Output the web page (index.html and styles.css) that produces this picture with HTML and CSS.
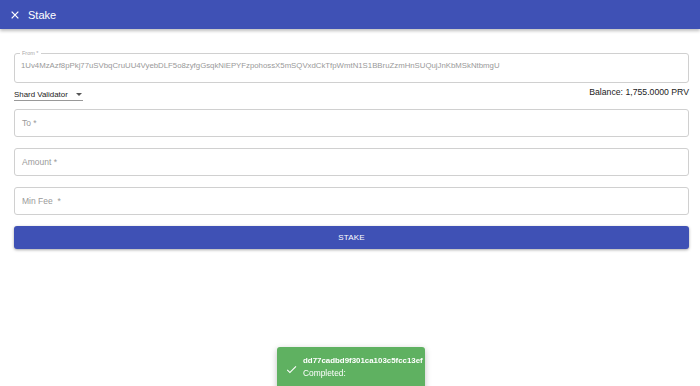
FILE: index.html
```html
<!DOCTYPE html>
<html>
<head>
<meta charset="utf-8">
<link rel="stylesheet" href="styles.css">
</head>
<body>
<header class="appbar">
  <svg class="close" viewBox="0 0 24 24" width="10" height="10"><path d="M4 4 L20 20 M20 4 L4 20" stroke="#fff" stroke-width="3" fill="none"/></svg>
  <span class="title">Stake</span>
</header>
<main class="content">
  <fieldset class="field filled">
    <legend>From *</legend>
    <div class="value">1Uv4MzAzf8pPkj77uSVbqCruUU4VyebDLF5o8zyfgGsqkNiEPYFzpohossX5mSQVxdCkTfpWmtN1S1BBruZzmHnSUQujJnKbMSkNtbmgU</div>
  </fieldset>
  <div class="row">
    <div class="select"><span class="sel-text">Shard Validator</span><svg class="arrow" viewBox="0 0 10 5" width="6" height="3"><path d="M0 0 L10 0 L5 5 Z" fill="#555"/></svg></div>
    <div class="balance">Balance: 1,755.0000 PRV</div>
  </div>
  <div class="field input"><span class="ph">To *</span></div>
  <div class="field input"><span class="ph">Amount *</span></div>
  <div class="field input"><span class="ph">Min Fee &nbsp;*</span></div>
  <button class="btn">STAKE</button>
</main>
<div class="toast">
  <svg class="check" viewBox="0 0 24 24" width="13" height="13"><path d="M9 16.2 L4.8 12 l-1.4 1.4 L9 19 21 7 l-1.4-1.4 L9 16.2z" fill="#fff"/></svg>
  <div class="msg">
    <div class="hash">dd77cadbd9f301ca103c5fcc13ef</div>
    <div class="status">Completed:</div>
  </div>
</div>
</body>
</html>
```
FILE: styles.css
```css
* { box-sizing: border-box; }
html, body { margin: 0; padding: 0; background: #fff; }
body { font-family: "Liberation Sans", Arial, sans-serif; color: #333; width: 700px; height: 386px; overflow: hidden; }

.appbar {
  height: 29px;
  background: #3f51b5;
  display: flex;
  align-items: center;
  padding-left: 10px;
  gap: 8px;
  box-shadow: 0 2px 3px rgba(0,0,0,0.25);
  color: #fff;
}
.close { display: block; }
.title { font-size: 11px; }

.content {
  padding: 20px 11px 0 14px;
  display: flex;
  flex-direction: column;
}

.field {
  border: 1px solid #d0d0d0;
  border-radius: 3px;
  margin: 0;
}
fieldset.field {
  padding: 0 6px 6px 6px;
  height: 34px;
}
fieldset.field legend {
  font-size: 5.5px;
  color: #aaa;
  padding: 0 2px;
  margin-left: -1px;
  line-height: 8px;
}
.value {
  font-size: 7.8px;
  color: #999;
  white-space: nowrap;
  overflow: hidden;
  padding-top: 4px;
}

.row {
  display: flex;
  justify-content: space-between;
  align-items: flex-start;
  margin-top: 3px;
  margin-bottom: 8px;
}
.select {
  display: flex;
  align-items: center;
  gap: 8px;
  font-size: 7.9px;
  color: #222;
  width: 69px;
  height: 15px;
  border-bottom: 1px solid #999;
  padding-top: 2px;
  white-space: nowrap;
}
.sel-text { flex: none; }
.arrow { display: block; margin-top: 1px; flex: none; }
.balance {
  font-size: 8.7px;
  color: #222;
  padding-top: 1px;
}

.field.input {
  height: 28px;
  display: flex;
  align-items: center;
  padding-left: 7px;
  margin-bottom: 11px;
}
.ph { font-size: 8.5px; color: #9a9a9a; }

.btn {
  margin-top: 0;
  height: 23px;
  border: none;
  border-radius: 3px;
  background: #3f51b5;
  color: #fff;
  font-family: "Liberation Sans", Arial, sans-serif;
  font-size: 8px;
  letter-spacing: 0.2px;
  box-shadow: 0 1px 3px rgba(0,0,0,0.35);
  padding: 0;
}

.toast {
  position: fixed;
  left: 277px;
  top: 347px;
  width: 148px;
  height: 45px;
  background: #5fb161;
  border-radius: 3px;
  box-shadow: 0 2px 6px rgba(0,0,0,0.25);
  display: flex;
  align-items: flex-start;
  padding: 8px 0 0 8px;
  gap: 5px;
  color: #fff;
  overflow: hidden;
}
.check { display: block; margin-top: 8px; flex: none; }
.msg { white-space: nowrap; min-width: 0; }
.hash { font-weight: bold; font-size: 7.9px; line-height: 12px; }
.status { font-size: 8.4px; line-height: 13px; }
```
